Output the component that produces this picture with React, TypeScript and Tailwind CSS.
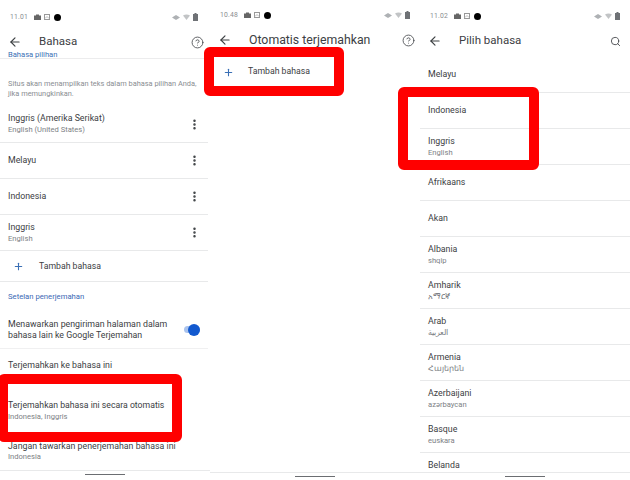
import { ArrowLeft, CircleHelp, EllipsisVertical, Plus, Search } from "lucide-react";

const font = { fontFamily: "Roboto, sans-serif" };

function StatusBar({ time, h }: { time: string; h: string }) {
  return (
    <div className={`flex items-center justify-between pl-[10px] pr-[10px] shrink-0 ${h}`}>
      <div className="flex items-center gap-[3px]">
        <span className="text-[6.800px] text-[#8a8d91] mr-[3px] tracking-[0.2px]">{time}</span>
        <svg width="7" height="6" viewBox="0 0 7 6"><path d="M0 1.500h2V.5h3v1h2V6H0z" fill="#666" /></svg>
        <svg width="6" height="6" viewBox="0 0 6 6"><rect x=".5" y=".5" width="5" height="5" fill="none" stroke="#999" /><path d="M1 4.500l2-2 2 2" fill="none" stroke="#bbb" /></svg>
        <span className="w-[7px] h-[7px] rounded-full bg-black ml-[1px]" />
      </div>
      <div className="flex items-center gap-[3px]">
        <svg width="8" height="7" viewBox="0 0 8 7"><path d="M0 3.500L4 1l4 2.500L4 6z" fill="#aeb1b4" /></svg>
        <svg width="7" height="6" viewBox="0 0 7 6"><path d="M0 1.500Q3.500-.5 7 1.500L3.500 6z" fill="#c2c4c6" /></svg>
        <svg width="5" height="8" viewBox="0 0 5 8"><path d="M1.500 0h2v1H5v7H0V1h1.500z" fill="#6f7276" /></svg>
      </div>
    </div>
  );
}

function Header({ title, icon, h, textClass, pr }: { title: string; icon: "help" | "search"; h: string; textClass: string; pr: string }) {
  return (
    <div className={`flex items-center pl-[8px] shrink-0 ${h} ${pr}`}>
      <ArrowLeft size={14} strokeWidth={2} color="#3c4043" />
      <span className={`ml-[17px] text-[#3c4043] flex-1 whitespace-nowrap ${textClass}`}>{title}</span>
      {icon === "help" ? (
        <CircleHelp size={13} strokeWidth={1.6} color="#4a4d51" />
      ) : (
        <Search size={11} strokeWidth={2} color="#4a4d51" />
      )}
    </div>
  );
}

function Row({ title, sub, h = "h-[36px]", dots = false }: { title: string; sub?: string; h?: string; dots?: boolean }) {
  return (
    <div className={`flex items-center pl-[8px] pr-[7px] border-b border-[#e8e9ea] shrink-0 ${h}`}>
      <div className="flex-1 min-w-0">
        <div className="text-[8.800px] leading-[11px] text-[#3c4043] whitespace-nowrap">{title}</div>
        {sub && <div className="text-[7.600px] leading-[11px] text-[#7d8185] whitespace-nowrap">{sub}</div>}
      </div>
      {dots && <EllipsisVertical size={13} strokeWidth={2.600} color="#3c4043" />}
    </div>
  );
}

function AddRow({ h, gap }: { h: string; gap: string }) {
  return (
    <div className={`flex items-center pl-[13px] shrink-0 ${h}`}>
      <Plus size={11} strokeWidth={2.400} color="#3a6fb5" />
      <span className={`text-[8.700px] text-[#3c4043] ${gap}`}>Tambah bahasa</span>
    </div>
  );
}

function HomeBar({ top }: { top: string }) {
  return (
    <div className={`absolute left-0 right-0 bottom-0 bg-white border-t border-[#e8e9ea] flex justify-center ${top}`}>
      <div className="w-[40px] h-[1px] bg-[#6b6e72] mt-[3px]" />
    </div>
  );
}

const list: [string, string?][] = [
  ["Melayu"],
  ["Indonesia"],
  ["Inggris", "English"],
  ["Afrikaans"],
  ["Akan"],
  ["Albania", "shqip"],
  ["Amharik", "አማርኛ"],
  ["Arab", "العربية"],
  ["Armenia", "Հայերեն"],
  ["Azerbaijani", "azərbaycan"],
  ["Basque", "euskara"],
  ["Belanda", "Nederlands"],
];

export default function App() {
  return (
    <div className="relative w-[630px] h-[480px] overflow-hidden bg-white grid grid-cols-[210px_210px_210px]" style={font}>
      <section className="relative flex flex-col overflow-hidden pr-[2px]">
        <StatusBar time="11.01" h="h-[32px] pt-[2px]" />
        <Header title="Bahasa" icon="help" h="h-[20px]" pr="pr-[4px]" textClass="text-[11.500px]" />
        <div className="h-[7px] border-b border-[#ececed] overflow-hidden flex items-end pl-[8px] shrink-0">
          <span className="text-[7.600px] leading-[8px] -mb-[1px] h-[3px] flex items-end text-[#3a6fb5]">Bahasa pilihan</span>
        </div>
        <div className="pl-[8px] pt-[20px] pb-[7px] text-[7.400px] leading-[10px] text-[#8a8e92] shrink-0 whitespace-nowrap">
          Situs akan menampilkan teks dalam bahasa pilihan Anda,<br />jika memungkinkan.
        </div>
        <Row title="Inggris (Amerika Serikat)" sub="English (United States)" h="h-[37px]" dots />
        <Row title="Melayu" dots />
        <Row title="Indonesia" dots />
        <Row title="Inggris" sub="English" dots />
        <AddRow h="h-[31px] pt-[1px] border-b border-[#e8e9ea]" gap="ml-[15px]" />
        <div className="h-[29px] flex items-center pl-[8px] text-[7.700px] text-[#3b68b5] shrink-0">Setelan penerjemahan</div>
        <div className="h-[38px] flex items-center pl-[8px] pr-[8px] border-b border-[#f0f0f1] shrink-0">
          <div className="flex-1 text-[8.800px] leading-[11px] text-[#3c4043] whitespace-nowrap">
            Menawarkan pengiriman halaman dalam<br />bahasa lain ke Google Terjemahan
          </div>
          <div className="relative w-[16px] h-[7px] rounded-full bg-[#a9c3ee] shrink-0">
            <span className="absolute right-0 -top-[2.500px] w-[12px] h-[12px] rounded-full bg-[#1259cf]" />
          </div>
        </div>
        <div className="pl-[8px] pt-[11px] shrink-0">
          <div className="text-[8.800px] leading-[11px] text-[#3c4043]">Terjemahkan ke bahasa ini</div>
          <div className="text-[7.600px] leading-[11px] text-[#7d8185]">Indonesia</div>
        </div>
        <div className="pl-[8px] pt-[18px] shrink-0">
          <div className="text-[8.700px] leading-[11px] text-[#3c4043] whitespace-nowrap">Terjemahkan bahasa ini secara otomatis</div>
          <div className="text-[7.600px] leading-[11px] text-[#7d8185]">Indonesia, Inggris</div>
        </div>
        <div className="pl-[8px] pt-[19px] shrink-0">
          <div className="text-[8.800px] leading-[10px] text-[#3c4043] whitespace-nowrap">Jangan tawarkan penerjemahan bahasa ini</div>
          <div className="text-[7.600px] leading-[11px] text-[#7d8185]">Indonesia</div>
        </div>
        <HomeBar top="h-[10px]" />
      </section>

      <section className="relative flex flex-col overflow-hidden">
        <StatusBar time="10.48" h="h-[30px]" />
        <Header title="Otomatis terjemahkan" icon="help" h="h-[20px]" pr="pr-[5px]" textClass="text-[12.300px]" />
        <div className="pt-[7px]">
          <AddRow h="h-[30px]" gap="ml-[14px]" />
        </div>
        <HomeBar top="h-[8px]" />
      </section>

      <section className="relative flex flex-col overflow-hidden">
        <StatusBar time="11.02" h="h-[32px]" />
        <Header title="Pilih bahasa" icon="search" h="h-[18px]" pr="pr-[9px]" textClass="text-[11.500px]" />
        <div className="pt-[7px] flex flex-col">
          {list.map(([t, s]) => (
            <Row key={t} title={t} sub={s} />
          ))}
        </div>
        <HomeBar top="h-[8px]" />
      </section>

      <div className="absolute left-[-2px] top-[374px] w-[184px] h-[68px] border-[10px] border-[#ff0000] rounded-[6px]" />
      <div className="absolute left-[204px] top-[47px] w-[140px] h-[49px] border-[10px] border-[#ff0000] rounded-[6px]" />
      <div className="absolute left-[398px] top-[87px] w-[141px] h-[83px] border-[10px] border-[#ff0000] rounded-[6px]" />
    </div>
  );
}
